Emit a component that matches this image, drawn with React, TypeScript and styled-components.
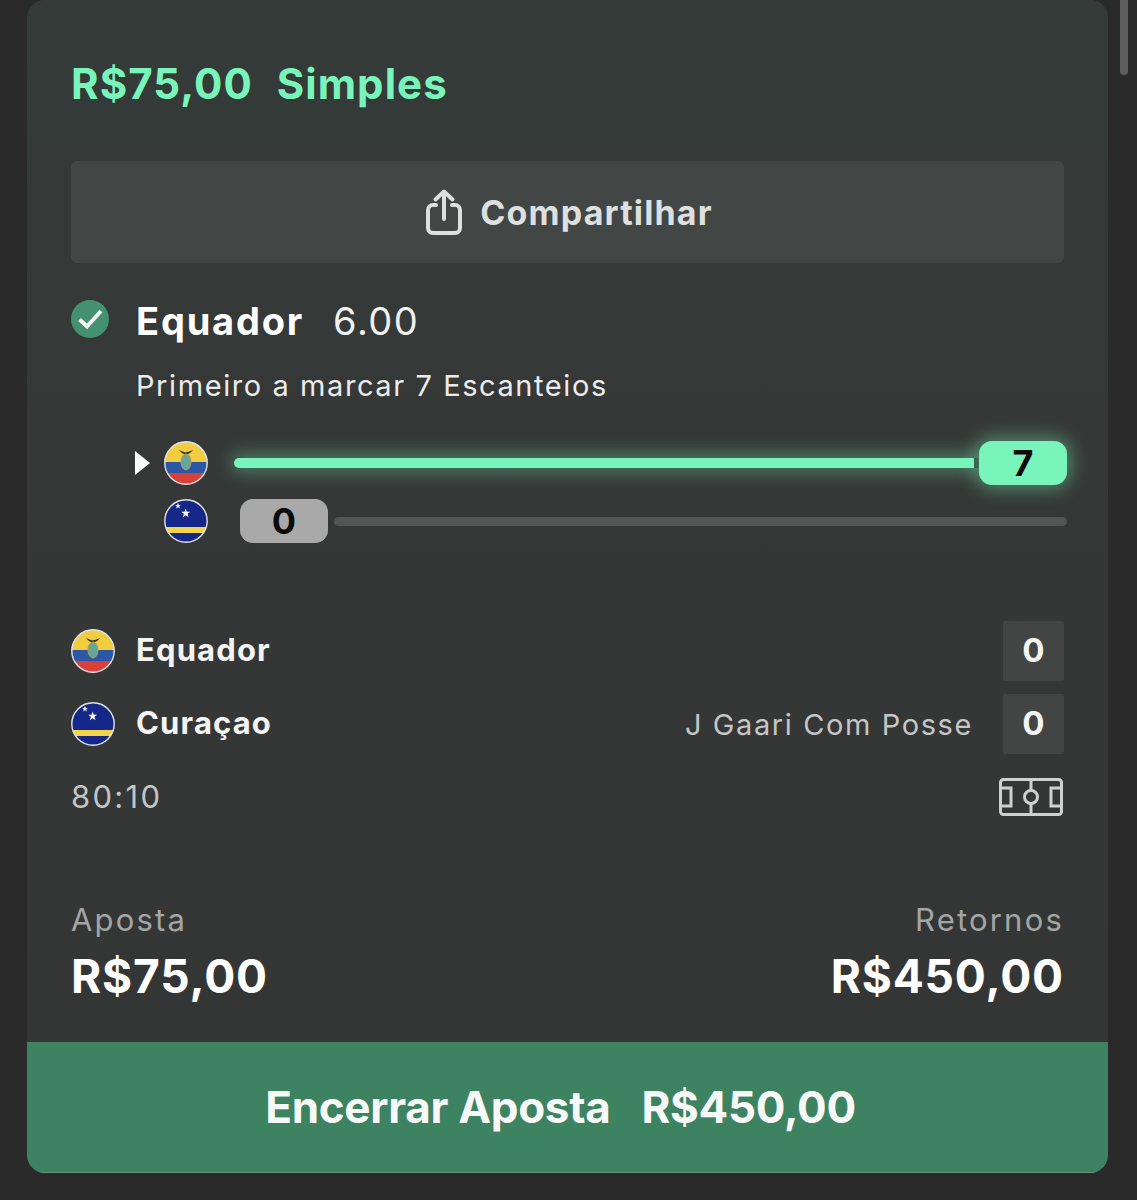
import React from "react";
import styled, { createGlobalStyle } from "styled-components";

const Global = createGlobalStyle`
  html, body { margin: 0; padding: 0; background: #2a2a2a; }
  body { font-family: Inter, "Liberation Sans", sans-serif; }
`;
const Page = styled.div`
  position: relative; width: 1137px; height: 1200px; overflow: hidden; background: #2a2a2a;
  padding-left: 27px; box-sizing: border-box;
`;
const Thumb = styled.div`
  position: absolute; left: 1120px; top: -10px; width: 8px; height: 85px; border-radius: 4px; background: #5e5e5e;
`;
const Card = styled.div`
  width: 1081px; height: 1173px; border-radius: 18px; background: #343837; overflow: hidden;
  display: flex; flex-direction: column;
`;
const Body = styled.div`
  flex: 1; padding: 0 44px; display: flex; flex-direction: column;
  background: linear-gradient(180deg, #343b39 0%, #353837 40%, #343635 100%);
`;
const Title = styled.div`
  height: 168px; padding-top: 59px; box-sizing: border-box; line-height: 50px;
  color: #79f5bc; font-size: 42px; font-weight: 650; letter-spacing: 1.05px; word-spacing: 1px; white-space: pre; flex: none;
`;
const ShareButton = styled.div`
  height: 102px; flex: none; border-radius: 6px; background: #424645; color: #dedfdf; box-sizing: border-box;
  display: flex; align-items: center; justify-content: center; gap: 18px; padding-left: 4px;
  font-size: 34px; font-weight: 650; letter-spacing: 1.15px; margin-top: -7px;
`;
const SelectionHead = styled.div`
  display: flex; align-items: center; height: 60px; margin-top: 28px; flex: none;
`;
const CheckSlot = styled.div` width: 65px; flex: none; display: flex; margin-top: -4px; `;
const SelectionName = styled.span` color: #fff; font-size: 38px; font-weight: 650; letter-spacing: 1.8px; `;
const Odds = styled.span` color: #f1f1f1; font-size: 38px; font-weight: 400; letter-spacing: 1.5px; margin-left: 29px; `;
const Market = styled.div`
  margin: 15px 0 0 65px; color: #ececec; font-size: 29px; line-height: 40px; letter-spacing: 1.58px; flex: none;
`;
const Tracks = styled.div`
  margin-top: 35px; display: flex; flex-direction: column; gap: 14px; flex: none; width: 996px;
`;
const TrackRow = styled.div` display: flex; align-items: center; height: 44px; `;
const ArrowSlot = styled.div` width: 137px; flex: none; display: flex; justify-content: flex-end; gap: 14px; align-items: center; `;
const TrackLine = styled.div`
  flex: 1; margin-left: 26px; display: flex; align-items: center; height: 44px;
`;
const Fill = styled.div`
  flex: 1; height: 10px; border-radius: 5px 0 0 5px; background: #79f5bc;
  box-shadow: 0 0 18px 4px rgba(121,245,188,.38);
  border-right: 5px solid #2c3b35;
`;
const Empty = styled.div` flex: 1; height: 9px; border-radius: 5px; background: #535554; margin-left: 6px; `;
const Pill = styled.div<{ $on?: boolean }>`
  width: 88px; height: 44px; border-radius: 13px; flex: none; display: flex; align-items: center; justify-content: center;
  color: #0b0b0b; font-size: 36px; font-weight: 700;
  background: ${p => (p.$on ? "#79f5bc" : "#a9a9a9")};
  ${p => (p.$on ? "box-shadow: 0 0 18px 4px rgba(121,245,188,.42); margin-left: 0;" : "margin-left: 6px;")}
`;
const Score = styled.div` margin-top: 78px; display: flex; flex-direction: column; gap: 13px; flex: none; `;
const ScoreRow = styled.div` display: flex; align-items: center; height: 60px; `;
const TeamName = styled.span` margin-left: 21px; padding-bottom: 3px; color: #f4f4f4; font-size: 31px; font-weight: 650; letter-spacing: 1.15px; `;
const Possession = styled.span` margin-left: auto; margin-right: 30px; color: #c5c6c6; font-size: 29px; letter-spacing: 1.6px; `;
const ScoreBox = styled.div<{ $push?: boolean }>`
  width: 61px; height: 60px; background: #424544; color: #f4f4f4; display: flex; align-items: center; justify-content: center;
  font-size: 33px; font-weight: 650; border-radius: 2px; padding-bottom: 2px; box-sizing: border-box; ${p => p.$push && "margin-left: auto;"}
`;
const Clock = styled.div`
  margin-top: 12px; display: flex; justify-content: space-between; align-items: center; height: 60px;
  color: #c4c5c5; font-size: 31px; letter-spacing: 2.3px; flex: none;
`;
const PitchSlot = styled.div` margin: 2px 1px 0 0; display: flex; `;
const Totals = styled.div` margin-top: 74px; display: flex; justify-content: space-between; flex: none; `;
const TotalCol = styled.div<{ $right?: boolean }>` display: flex; flex-direction: column; align-items: ${p => (p.$right ? "flex-end" : "flex-start")}; `;
const TotalLabel = styled.span` color: #a4a5a5; font-size: 31px; line-height: 40px; letter-spacing: 2.2px; `;
const TotalValue = styled.span` color: #fff; font-size: 46px; font-weight: 650; letter-spacing: .85px; line-height: 64px; margin-top: 4px; `;
const CashOut = styled.div`
  flex: none; height: 131px; background: #3d8361; color: #f6f9f7; display: flex; align-items: center; justify-content: center;
  font-size: 44px; font-weight: 650; letter-spacing: -.3px; gap: 31px; padding-right: 14px; border-bottom: 1px solid #69927e; box-sizing: border-box;
`;

const FlagSvg = styled.svg` display: block; flex: none; `;

const Ecuador = () => (
  <FlagSvg width="44" height="44" viewBox="0 0 44 44">
    <defs><clipPath id="ec"><circle cx="22" cy="22" r="21.5" /></clipPath></defs>
    <g clipPath="url(#ec)">
      <rect width="44" height="22" fill="#f2cd3f" />
      <rect y="21" width="44" height="11.5" fill="#2c56a8" />
      <rect y="32" width="44" height="12" fill="#d8403a" />
    </g>
    <path d="M15 9 Q19 10.500 21.500 11.500 Q25 10.500 29 9 Q26 13 22 13.500 Q18 13 15 9Z" fill="#3a3327" />
    <ellipse cx="22" cy="21" rx="5" ry="8" fill="#6aa59c" stroke="#b29d4a" strokeWidth="1" />
    <circle cx="22" cy="22" r="21.200" fill="none" stroke="#dfe3e6" strokeWidth="1.400" />
  </FlagSvg>
);
const Curacao = () => (
  <FlagSvg width="44" height="44" viewBox="0 0 44 44">
    <defs><clipPath id="cw"><circle cx="22" cy="22" r="21.500" /></clipPath></defs>
    <g clipPath="url(#cw)">
      <rect width="44" height="44" fill="#15288a" />
      <rect y="28" width="44" height="6" fill="#f2d54a" />
    </g>
    <polygon points="21.700,9.500 22.800,12.700 26.200,12.700 23.500,14.800 24.500,18.200 21.700,16.200 18.900,18.200 19.900,14.800 17.200,12.700 20.600,12.700" fill="#fff" />
    <polygon points="14,3.800 14.800,6 17,6 15.200,7.300 15.900,9.500 14,8.200 12.100,9.500 12.800,7.300 11,6 13.200,6" fill="#f2f2ff" />
    <circle cx="22" cy="22" r="21.200" fill="none" stroke="#dfe3e6" strokeWidth="1.400" />
  </FlagSvg>
);
const Check = () => (
  <svg width="38" height="38" viewBox="0 0 38 38">
    <circle cx="19" cy="19" r="19" fill="#439171" />
    <path d="M8.500 19.500 L16 26.500 L30 11" fill="none" stroke="#f4f7f5" strokeWidth="4" />
  </svg>
);
const Share = () => (
  <svg width="36" height="46" viewBox="0 0 36 46" fill="none" stroke="#dedfdf" strokeWidth="4" strokeLinecap="round" strokeLinejoin="round">
    <path d="M10 16 H7 A5 5 0 0 0 2 21 V39 A5 5 0 0 0 7 44 H29 A5 5 0 0 0 34 39 V21 A5 5 0 0 0 29 16 H26" />
    <path d="M18 30 V3 M9.500 10.500 L18 2.500 L26.500 10.500" />
  </svg>
);
const Pitch = () => (
  <svg width="64" height="38" viewBox="0 0 64 38" fill="none" stroke="#cfd0d0" strokeWidth="3">
    <rect x="1.500" y="1.500" width="61" height="35" rx="3" />
    <path d="M32 1.500 V12.500 M32 25.500 V36.500" />
    <circle cx="32" cy="19" r="6.500" />
    <path d="M1.500 10 H12 V28 H1.500 M62.500 10 H52 V28 H62.500" />
  </svg>
);
const Arrow = () => (
  <svg width="15" height="24" viewBox="0 0 15 24"><path d="M0 0 L15 12 L0 24Z" fill="#fff" /></svg>
);

export default function App() {
  return (
    <Page>
      <Global />
      <Thumb />
      <Card>
        <Body>
          <Title>R$75,00  Simples</Title>
          <ShareButton><Share />Compartilhar</ShareButton>
          <SelectionHead>
            <CheckSlot><Check /></CheckSlot>
            <SelectionName>Equador</SelectionName>
            <Odds>6.00</Odds>
          </SelectionHead>
          <Market>Primeiro a marcar 7 Escanteios</Market>
          <Tracks>
            <TrackRow>
              <ArrowSlot><Arrow /><Ecuador /></ArrowSlot>
              <TrackLine><Fill /><Pill $on>7</Pill></TrackLine>
            </TrackRow>
            <TrackRow>
              <ArrowSlot><Curacao /></ArrowSlot>
              <TrackLine><Pill>0</Pill><Empty /></TrackLine>
            </TrackRow>
          </Tracks>
          <Score>
            <ScoreRow><Ecuador /><TeamName>Equador</TeamName><ScoreBox $push>0</ScoreBox></ScoreRow>
            <ScoreRow><Curacao /><TeamName>Curaçao</TeamName><Possession>J Gaari Com Posse</Possession><ScoreBox>0</ScoreBox></ScoreRow>
          </Score>
          <Clock><span>80:10</span><PitchSlot><Pitch /></PitchSlot></Clock>
          <Totals>
            <TotalCol><TotalLabel>Aposta</TotalLabel><TotalValue>R$75,00</TotalValue></TotalCol>
            <TotalCol $right><TotalLabel>Retornos</TotalLabel><TotalValue>R$450,00</TotalValue></TotalCol>
          </Totals>
        </Body>
        <CashOut><span>Encerrar Aposta</span><span>R$450,00</span></CashOut>
      </Card>
    </Page>
  );
}
